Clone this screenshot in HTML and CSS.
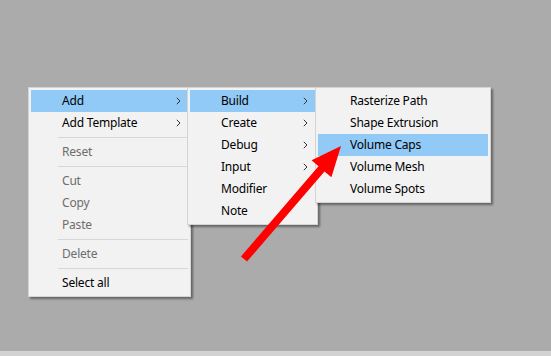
FILE: index.html
```html
<!DOCTYPE html>
<html>
<head>
<meta charset="utf-8">
<link rel="stylesheet" href="styles.css">
</head>
<body>
<div class="desktop">
  <div class="menus">
    <div class="menu menu-main">
      <div class="item active"><span>Add</span><svg class="chev" width="5" height="8" viewBox="0 0 5 8"><path d="M0.8 0.8 L4 4 L0.8 7.2"/></svg></div>
      <div class="item"><span>Add Template</span><svg class="chev" width="5" height="8" viewBox="0 0 5 8"><path d="M0.8 0.8 L4 4 L0.8 7.2"/></svg></div>
      <div class="sep"></div>
      <div class="item disabled"><span>Reset</span></div>
      <div class="sep"></div>
      <div class="item disabled"><span>Cut</span></div>
      <div class="item disabled"><span>Copy</span></div>
      <div class="item disabled"><span>Paste</span></div>
      <div class="sep"></div>
      <div class="item disabled"><span>Delete</span></div>
      <div class="sep"></div>
      <div class="item"><span>Select all</span></div>
    </div>
    <div class="menu menu-add">
      <div class="item active"><span>Build</span><svg class="chev" width="5" height="8" viewBox="0 0 5 8"><path d="M0.8 0.8 L4 4 L0.8 7.2"/></svg></div>
      <div class="item"><span>Create</span><svg class="chev" width="5" height="8" viewBox="0 0 5 8"><path d="M0.8 0.8 L4 4 L0.8 7.2"/></svg></div>
      <div class="item"><span>Debug</span><svg class="chev" width="5" height="8" viewBox="0 0 5 8"><path d="M0.8 0.8 L4 4 L0.8 7.2"/></svg></div>
      <div class="item"><span>Input</span><svg class="chev" width="5" height="8" viewBox="0 0 5 8"><path d="M0.8 0.8 L4 4 L0.8 7.2"/></svg></div>
      <div class="item"><span>Modifier</span></div>
      <div class="item"><span>Note</span></div>
    </div>
    <div class="menu menu-build">
      <div class="item"><span>Rasterize Path</span></div>
      <div class="item"><span>Shape Extrusion</span></div>
      <div class="item active"><span>Volume Caps</span></div>
      <div class="item"><span>Volume Mesh</span></div>
      <div class="item"><span>Volume Spots</span></div>
    </div>
  </div>
  <svg class="pointer" width="551" height="351" viewBox="0 0 551 351">
    <polygon points="241,256.4 318.5,166.2 311.6,160.3 341,146 331.4,177.3 324.5,171.4 247,261.6" fill="#ff0000"/>
  </svg>
</div>
<div class="taskbar"></div>
</body>
</html>
```

FILE: styles.css
```css
html, body {
  margin: 0;
  padding: 0;
}
body {
  width: 551px;
  height: 356px;
  overflow: hidden;
  background: #ababab;
  font-family: "Noto Sans", "Noto Sans CJK KR", sans-serif;
  font-size: 12px;
  letter-spacing: -0.2px;
  color: #000;
  display: flex;
  flex-direction: column;
}
.desktop {
  position: relative;
  height: 351px;
}
.menus {
  display: flex;
  align-items: flex-start;
  padding: 87px 0 0 28px;
}
.menu {
  box-sizing: border-box;
  background: #f2f2f2;
  border: 1px solid #d4d4d4;
  padding: 2px;
  box-shadow: 2px 2px 2px rgba(0, 0, 0, 0.4);
  display: flex;
  flex-direction: column;
}
.menu-main {
  width: 163px;
}
.menu-add {
  width: 131px;
  margin-left: -4px;
}
.menu-build {
  width: 176px;
  margin-left: -3px;
}
.item {
  height: 22px;
  display: flex;
  align-items: center;
  padding-left: 31px;
  white-space: nowrap;
}
.menu-build .item {
  padding-left: 32px;
}
.item span {
  line-height: 22px;
}
.item.active {
  background: #91c9f7;
}
.item.disabled {
  color: #6d6d6d;
}
.chev {
  margin-left: auto;
  margin-right: 7px;
}
.chev path {
  fill: none;
  stroke: #333;
  stroke-width: 1;
}
.sep {
  margin: 3px 0 3px 27px;
  border-top: 1px solid #d7d7d7;
}
.pointer {
  position: absolute;
  left: 0;
  top: 0;
}
.taskbar {
  height: 5px;
  background: #d2d2d2;
}
```
